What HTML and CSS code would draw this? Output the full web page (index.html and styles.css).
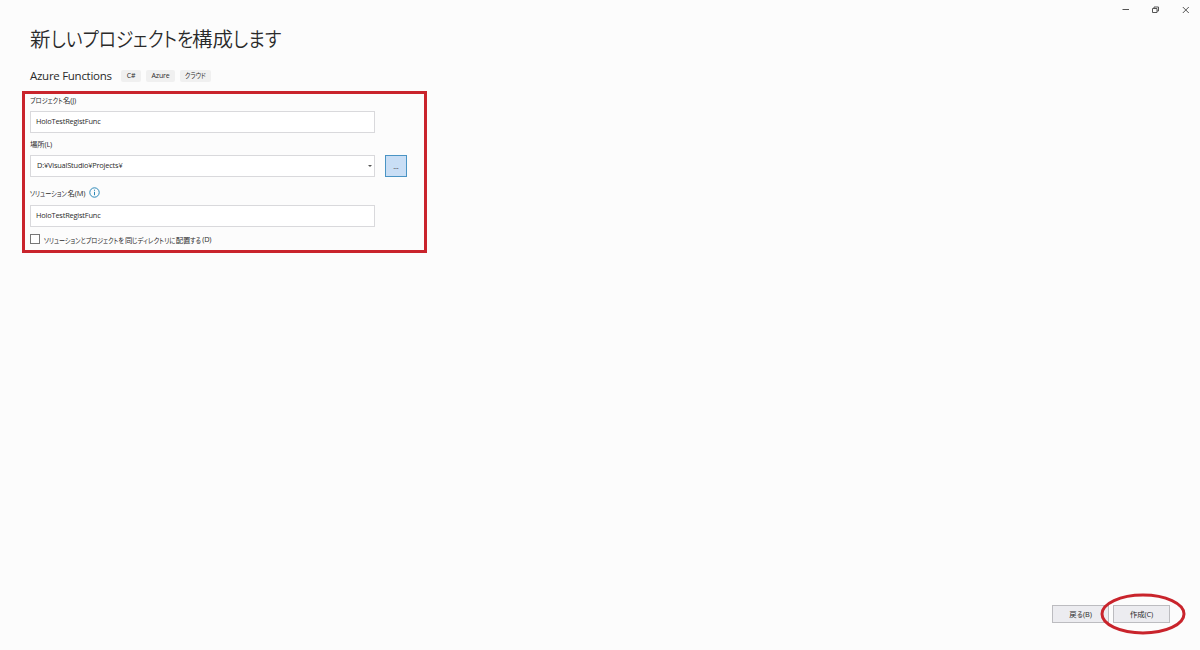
FILE: index.html
```html
<!DOCTYPE html>
<html lang="ja">
<head>
  <meta charset="UTF-8" />
  <meta name="viewport" content="width=device-width, initial-scale=1" />
  <title>新しいプロジェクトを構成します</title>
  <link rel="stylesheet" href="styles.css">
</head>
<body>
  <div class="window">
    <div class="titlebar">
      <svg width="8" height="8" viewBox="0 0 8 8"><path d="M.5 3.5h6.5" /></svg>
      <svg width="8" height="8" viewBox="0 0 8 8"><path d="M.5 2.5h4.5v4H.5zM2 2.5V1H6.5v4H5" /></svg>
      <svg width="8" height="8" viewBox="0 0 8 8"><path d="M.8 1l6 6M6.8 1l-6 6" /></svg>
    </div>

    <main>
      <h1>新<span class="kana title-a">しいプロジェクトを</span>構成<span class="kana title-b">します</span></h1>
      <div class="template">
        <h2>Azure Functions</h2>
        <span class="tag tag-cs">C#</span>
        <span class="tag tag-azure">Azure</span>
        <span class="tag tag-cloud"><span class="kana cloud">クラウド</span></span>
      </div>

      <form class="settings">
        <label class="name-label"><span class="kana project">プロジェクト</span>名(J)</label>
        <div class="field">HoloTestRegistFunc</div>
        <label class="place-label">場所(L)</label>
        <div class="place">
          <div class="field combo">D:¥VisualStudio¥Projects¥<i class="arrow"></i></div>
          <button type="button" class="browse">...</button>
        </div>
        <label class="solution-label"><span class="kana solution">ソリューション</span>名(M)
          <svg class="info" width="11" height="11" viewBox="0 0 11 11"><circle cx="5.5" cy="5.5" r="4.7" /><path d="M5.5 4.8v3.4M5.5 2.7v1.1" /></svg>
        </label>
        <div class="field">HoloTestRegistFunc</div>
        <label class="same-dir"><i class="checkbox"></i><span class="kana dir-a">ソリューションとプロジェクトを</span>同<span class="kana dir-b">じディレクトリに</span>配置<span class="kana dir-c">する</span>(D)</label>
      </form>
    </main>

    <footer>
      <button type="button">戻<span class="kana back">る</span>(B)</button>
      <button type="button">作成(C)</button>
      <svg class="ring" width="86" height="42" viewBox="0 0 86 42"><ellipse cx="43" cy="21" rx="41" ry="19" /></svg>
    </footer>
  </div>
</body>
</html>
```

FILE: styles.css
```css
* {
  box-sizing: border-box;
}
body {
  margin: 0;
  background: #fcfcfc;
  color: #2a2a2a;
  font-family: "Open Sans", "Noto Sans CJK JP", sans-serif;
  font-size: 7.4px;
  letter-spacing: -0.18px;
}
.window {
  display: flex;
  flex-direction: column;
  height: 650px;
}
.titlebar {
  display: flex;
  justify-content: flex-end;
  gap: 22px;
  height: 20px;
  padding: 6px 10px 0 0;
}
svg {
  fill: none;
  stroke: #555;
  stroke-width: 1;
}
main {
  flex: 1;
  padding: 4px 0 0 22px;
}
h1 {
  margin: 0 0 0 8px;
  font-size: 20.5px;
  font-weight: 350;
  letter-spacing: 0;
  line-height: 31px;
  white-space: nowrap;
}

/* 仮名は幅を詰めて表示 */
.kana {
  display: inline-block;
  font-feature-settings: "palt";
  letter-spacing: 0;
  transform: scaleX(0.86);
  transform-origin: 0 50%;
  white-space: nowrap;
}
.title-a { width: 141.5px; }
.title-b { width: 48px; transform: scaleX(0.88); }
.cloud { width: 21px; }
.project { width: 33px; transform: scaleX(0.83); }
.solution { width: 37.5px; transform: scaleX(0.83); }
.dir-a { width: 81px; transform: scaleX(0.82); }
.dir-b { width: 43.5px; transform: scaleX(0.86); }
.dir-c { width: 12px; transform: scaleX(0.82); }
.back { width: 6.5px; }

.template {
  display: flex;
  align-items: center;
  height: 18px;
  margin: 12px 0 0 8px;
}
h2 {
  margin: 0 9px 0 0;
  width: 82px;
  font-size: 11.5px;
  font-weight: 400;
  line-height: 16px;
  letter-spacing: -0.28px;
  white-space: nowrap;
}
.tag {
  height: 12px;
  margin-right: 5px;
  border-radius: 2px;
  background: #f0f0f0;
  font-size: 7px;
  line-height: 12px;
  text-align: center;
}
.tag-cs { width: 20px; }
.tag-azure { width: 29px; }
.tag-cloud { width: 31px; }

.settings {
  width: 405px;
  height: 162px;
  margin-top: 6px;
  padding: 0 5px;
  border: 3px solid #c9242c;
}
label {
  display: flex;
  align-items: center;
  white-space: nowrap;
}
.name-label {
  height: 10px;
  margin-bottom: 7px;
}
.place-label {
  height: 12px;
  margin: 4px 0 6px;
}
.solution-label {
  height: 12px;
  margin: 10px 0 6px;
  padding-bottom: 1px;
}
.field {
  width: 345px;
  height: 22px;
  padding-left: 5px;
  border: 1px solid #d9d9dc;
  background: #fff;
  line-height: 19px;
}
.place {
  display: flex;
  gap: 10px;
}
.combo {
  display: flex;
  justify-content: space-between;
  align-items: center;
  padding: 0 2px 1px 6px;
}
.arrow {
  border: 2px solid transparent;
  border-top-color: #555;
  border-bottom: 0;
}
.browse {
  width: 22px;
  height: 22px;
  border: 1px solid #4a94c4;
  background: #c9def5;
}
.info {
  margin-left: 4px;
  stroke: #2b88b8;
}
.same-dir {
  height: 14px;
  margin-top: 5px;
}
.checkbox {
  width: 10px;
  height: 10px;
  margin-right: 4px;
  border: 1px solid #777;
  background: #fff;
}
button {
  padding: 0;
  border: 1px solid #bcbcc0;
  background: #ececf0;
  color: #2a2a2a;
  font: inherit;
  letter-spacing: inherit;
}
footer {
  position: relative;
  display: flex;
  justify-content: flex-end;
  gap: 4px;
  height: 45px;
  padding-right: 30px;
}
footer button {
  width: 57px;
  height: 18px;
  padding-bottom: 2px;
}
.ring {
  position: absolute;
  right: 14px;
  top: -12px;
  stroke: #c9242c;
  stroke-width: 3;
}
```
